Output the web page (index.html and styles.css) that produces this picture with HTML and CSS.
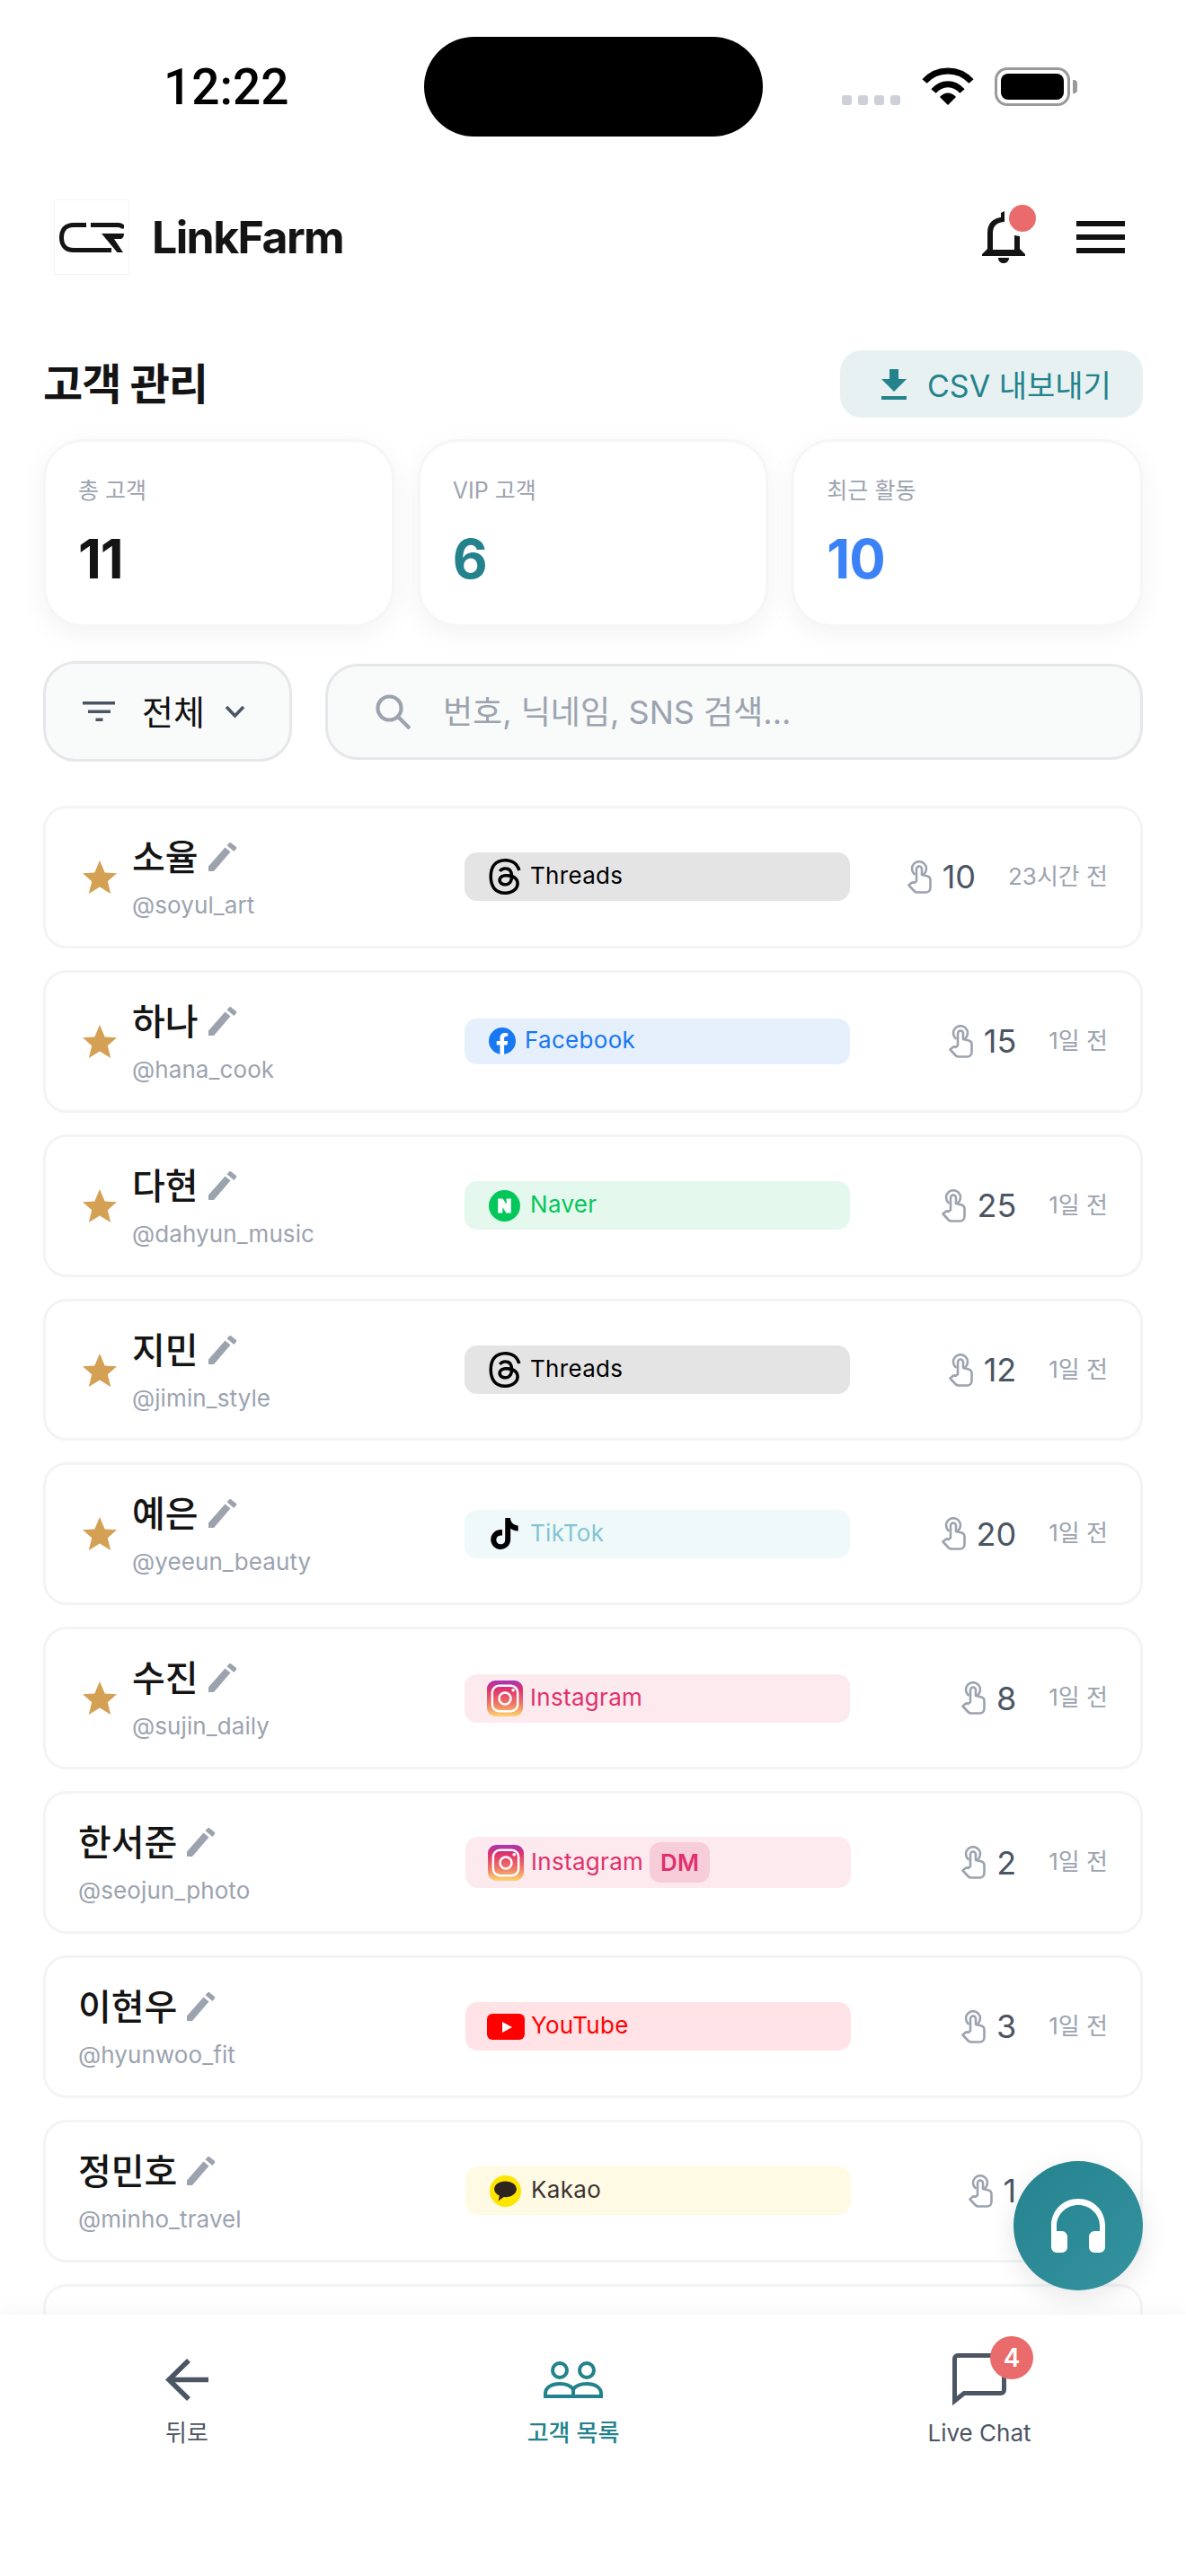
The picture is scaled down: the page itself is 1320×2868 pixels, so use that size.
FILE: index.html
```html
<!DOCTYPE html>
<html lang="ko">
<head>
  <meta charset="UTF-8">
  <title>LinkFarm</title>
  <link rel="stylesheet" href="styles.css">
</head>
<body>
  <svg class="defs" width="0" height="0">
    <defs>
      <linearGradient id="ig" x1="0" y1="0" x2="0" y2="1">
        <stop offset="0" stop-color="#a435b8"/>
        <stop offset=".25" stop-color="#e0326e"/>
        <stop offset=".65" stop-color="#ee7766"/>
        <stop offset="1" stop-color="#fdd56f"/>
      </linearGradient>
      <symbol id="i-star" viewBox="0 0 38 37"><path fill="#d4a053" d="M19 0l5.700 13.500L38 14.300 27.800 23.300 31.200 37 19 29.500 6.800 37l3.400-13.700L0 14.300l13.300-.8z"/></symbol>
      <symbol id="i-pen" viewBox="0 0 32 32"><path fill="#9ca3af" d="M0 32v-5.500L18.500 5.500l6 5L6 32zM20.500 3.300L23 .6c.6-.7 1.600-.8 2.300-.2l5.400 4.400c.7.6.8 1.600.2 2.300l-2.500 2.900z"/></symbol>
      <symbol id="i-tap" viewBox="0 0 27 37"><g fill="none" stroke="#9ca3af" stroke-width="2.600" stroke-linejoin="round" stroke-linecap="round"><path d="M7.500 15a8 8 0 1 1 11 0"/><path d="M10 23V9.500a3 3 0 0 1 6 0V16l5.500 1.200c2.500.6 4 2 4 4.500V30c0 3-2 5.500-5 5.500H11c-1.500 0-2.500-.5-3.500-1.500l-6-6.500 3-2.500c1-.8 2-.8 3 0z"/></g></symbol>
      <symbol id="i-threads" viewBox="0 0 24 24"><path fill="#000" d="M12.186 24h-.007c-3.581-.024-6.334-1.205-8.184-3.509C2.35 18.44 1.5 15.586 1.472 12.01v-.017c.03-3.579.879-6.43 2.525-8.482C5.845 1.205 8.6.024 12.18 0h.014c2.746.02 5.043.725 6.826 2.098 1.677 1.29 2.858 3.13 3.509 5.467l-2.04.569c-1.104-3.96-3.898-5.984-8.304-6.015-2.91.022-5.11.936-6.54 2.717C4.307 6.504 3.616 8.914 3.589 12c.027 3.086.718 5.496 2.057 7.164 1.43 1.783 3.631 2.698 6.54 2.717 2.623-.02 4.358-.631 5.8-2.045 1.647-1.613 1.618-3.593 1.09-4.798-.31-.71-.873-1.3-1.634-1.75-.192 1.352-.622 2.446-1.284 3.272-.886 1.102-2.14 1.704-3.73 1.79-1.202.065-2.361-.218-3.259-.801-1.063-.689-1.685-1.74-1.752-2.964-.065-1.19.408-2.285 1.33-3.082.88-.76 2.119-1.207 3.583-1.291a13.853 13.853 0 0 1 3.02.142c-.126-.742-.375-1.332-.75-1.757-.513-.586-1.308-.883-2.359-.89h-.029c-.844 0-1.992.232-2.721 1.32L7.734 7.847c.98-1.454 2.568-2.256 4.478-2.256h.044c3.194.02 5.097 1.975 5.287 5.388.108.046.216.094.321.142 1.49.7 2.58 1.761 3.154 3.07.797 1.82.871 4.79-1.548 7.158-1.85 1.81-4.094 2.628-7.277 2.65zm1.003-11.69c-.242 0-.487.007-.739.021-1.836.103-2.98.946-2.916 2.143.067 1.256 1.452 1.839 2.784 1.767 1.224-.065 2.818-.543 3.086-3.71a10.5 10.5 0 0 0-2.215-.221z"/></symbol>
      <symbol id="i-facebook" viewBox="0 0 24 24"><circle cx="12" cy="12" r="12" fill="#1877f2"/><path fill="#fff" d="M10 24v-8.500H7V12h3V9.300C10 6.300 11.800 4.700 14.500 4.700c1.300 0 2.500.2 2.500.2v2.900h-1.400c-1.400 0-1.900.9-1.900 1.800V12h3.200l-.5 3.500h-2.700V24z"/></symbol>
      <symbol id="i-naver" viewBox="0 0 24 24"><circle cx="12" cy="12" r="12" fill="#03c75a"/><path fill="#fff" d="M7 6.500h3.700l2.800 4.400V6.500H17v11h-3.700l-2.800-4.400v4.400H7z"/></symbol>
      <symbol id="i-tiktok" viewBox="0 0 24 24"><path fill="#000" d="M12.525.02c1.31-.02 2.61-.01 3.91-.02.08 1.53.63 3.09 1.75 4.17 1.12 1.11 2.7 1.62 4.24 1.79v4.03c-1.44-.05-2.89-.35-4.2-.97-.57-.26-1.1-.59-1.62-.93-.01 2.92.01 5.84-.02 8.75-.08 1.4-.54 2.79-1.35 3.94-1.31 1.92-3.58 3.17-5.91 3.21-1.43.08-2.86-.31-4.08-1.03-2.02-1.19-3.44-3.37-3.65-5.71-.02-.5-.03-1-.01-1.49.18-1.9 1.12-3.72 2.58-4.96 1.66-1.44 3.98-2.13 6.15-1.72.02 1.48-.04 2.96-.04 4.44-.99-.32-2.15-.23-3.02.37-.63.41-1.11 1.04-1.36 1.75-.21.51-.15 1.07-.14 1.61.24 1.64 1.82 3.02 3.5 2.87 1.12-.01 2.19-.66 2.77-1.61.19-.33.4-.67.41-1.06.1-1.79.06-3.57.07-5.36.01-4.03-.01-8.05.02-12.07z"/></symbol>
      <symbol id="i-instagram" viewBox="0 0 24 24"><rect width="24" height="24" rx="5.500" fill="url(#ig)"/><rect x="3.500" y="3.500" width="17" height="17" rx="4.500" fill="none" stroke="#fff" stroke-width="1.500"/><circle cx="12" cy="12" r="3.900" fill="none" stroke="#fff" stroke-width="1.500"/><circle cx="17.500" cy="6.500" r="1.100" fill="#fff"/></symbol>
      <symbol id="i-youtube" viewBox="0 0 42 29"><rect width="42" height="29" rx="6" fill="#f00"/><path fill="#fff" d="M17 9l11 6-11 6z"/></symbol>
      <symbol id="i-kakao" viewBox="0 0 24 24"><circle cx="12" cy="12" r="12" fill="#fee500"/><path fill="#2d2320" d="M12 4.500c-4.700 0-8.500 2.700-8.500 6 0 2.200 1.600 4 4 5.100l-1 3.900 4.300-3c.4 0 .8.100 1.200.100 4.700 0 8.500-2.700 8.500-6.100S16.700 4.500 12 4.500z"/></symbol>
    </defs>
  </svg>

  <div class="phone">
    <div class="status-bar">
      <span class="clock">12:22</span>
      <span class="island"></span>
      <div class="status-icons">
        <span class="signal"><i></i><i></i><i></i><i></i></span>
        <svg class="wifi" width="58" height="42" viewBox="0 0 58 42"><g fill="none" stroke="#000" stroke-width="7"><path d="M3 15.500C17 0 41 0 55 15.500"/><path d="M13 26.500C22 16 36 16 45 26.500"/></g><path fill="#000" d="M20 33C25 27 33 27 38 33L29 42z"/></svg>
        <span class="battery"><span class="battery-fill"></span></span>
        <span class="battery-cap"></span>
      </div>
    </div>

    <header class="app-header">
      <div class="brand">
        <span class="logo">
          <svg width="72" height="33" viewBox="0 0 72 33"><g fill="none" stroke="#141414" stroke-width="5"><path d="M30 2.500H16C7 2.500 2.500 8 2.500 16.500S7 30.500 16 30.500H58"/><path d="M35 2.500H65c3.500 0 6 1.500 6 4"/></g><path fill="#141414" d="M47 12H72c0 3-1 5-3 6h-8L71 33h-6.500z"/></svg>
        </span>
        <span class="brand-name">LinkFarm</span>
      </div>
      <div class="header-actions">
        <span class="bell">
          <svg width="48" height="58" viewBox="0 0 48 58"><path fill="#141414" d="M0 50v-2l6-6V24C6 14 12 8 21 7V2l4-2v12C17 12 12 17 12 24v19h24V27l6 1v14l6 6v2zM18 52h12c0 4-3 6-6 6s-6-2-6-6z"/></svg>
          <span class="bell-dot"></span>
        </span>
        <span class="menu"><i></i><i></i><i></i></span>
      </div>
    </header>

    <section class="title-row">
      <h1>고객 관리</h1>
      <button class="export-btn">
        <svg width="28" height="34" viewBox="0 0 28 34"><path fill="#23828c" d="M9 0h10v11h9L14 25 0 11h9zM0 30h28v4H0z"/></svg>
        <span>CSV 내보내기</span>
      </button>
    </section>

    <section class="stats">
      <div class="stat"><div class="stat-label">총 고객</div><div class="stat-value">11</div></div>
      <div class="stat"><div class="stat-label">VIP 고객</div><div class="stat-value teal">6</div></div>
      <div class="stat"><div class="stat-label">최근 활동</div><div class="stat-value blue">10</div></div>
    </section>

    <section class="filters">
      <div class="filter-select">
        <svg width="36" height="22" viewBox="0 0 36 22"><path fill="#4b5563" d="M0 0h36v3.500H0zM6 9.500h25v3.500H6zM14.500 18.500h8V22h-8z"/></svg>
        <span>전체</span>
        <svg width="23" height="15" viewBox="0 0 23 15"><path fill="none" stroke="#4b5563" stroke-width="3.600" d="M2 2l9.500 10L21 2"/></svg>
      </div>
      <div class="search">
        <svg width="39" height="39" viewBox="0 0 39 39"><g fill="none" stroke="#9ca3af" stroke-width="4.200"><circle cx="15.500" cy="15.500" r="13"/><path d="M25 25l13 13"/></g></svg>
        <span>번호, 닉네임, SNS 검색...</span>
      </div>
    </section>

    <section class="customers">
      <div class="customer">
        <svg class="star"><use href="#i-star"/></svg>
        <div class="who"><div class="name">소율 <svg class="pen"><use href="#i-pen"/></svg></div><div class="handle">@soyul_art</div></div>
        <div class="channel threads"><svg class="ch-icon tall"><use href="#i-threads"/></svg><span>Threads</span></div>
        <div class="count"><svg class="tap"><use href="#i-tap"/></svg><span>10</span></div>
        <div class="when">23시간 전</div>
      </div>
      <div class="customer">
        <svg class="star"><use href="#i-star"/></svg>
        <div class="who"><div class="name">하나 <svg class="pen"><use href="#i-pen"/></svg></div><div class="handle">@hana_cook</div></div>
        <div class="channel facebook"><svg class="ch-icon small"><use href="#i-facebook"/></svg><span>Facebook</span></div>
        <div class="count"><svg class="tap"><use href="#i-tap"/></svg><span>15</span></div>
        <div class="when">1일 전</div>
      </div>
      <div class="customer">
        <svg class="star"><use href="#i-star"/></svg>
        <div class="who"><div class="name">다현 <svg class="pen"><use href="#i-pen"/></svg></div><div class="handle">@dahyun_music</div></div>
        <div class="channel naver"><svg class="ch-icon mid"><use href="#i-naver"/></svg><span>Naver</span></div>
        <div class="count"><svg class="tap"><use href="#i-tap"/></svg><span>25</span></div>
        <div class="when">1일 전</div>
      </div>
      <div class="customer">
        <svg class="star"><use href="#i-star"/></svg>
        <div class="who"><div class="name">지민 <svg class="pen"><use href="#i-pen"/></svg></div><div class="handle">@jimin_style</div></div>
        <div class="channel threads"><svg class="ch-icon tall"><use href="#i-threads"/></svg><span>Threads</span></div>
        <div class="count"><svg class="tap"><use href="#i-tap"/></svg><span>12</span></div>
        <div class="when">1일 전</div>
      </div>
      <div class="customer">
        <svg class="star"><use href="#i-star"/></svg>
        <div class="who"><div class="name">예은 <svg class="pen"><use href="#i-pen"/></svg></div><div class="handle">@yeeun_beauty</div></div>
        <div class="channel tiktok"><svg class="ch-icon mid"><use href="#i-tiktok"/></svg><span>TikTok</span></div>
        <div class="count"><svg class="tap"><use href="#i-tap"/></svg><span>20</span></div>
        <div class="when">1일 전</div>
      </div>
      <div class="customer">
        <svg class="star"><use href="#i-star"/></svg>
        <div class="who"><div class="name">수진 <svg class="pen"><use href="#i-pen"/></svg></div><div class="handle">@sujin_daily</div></div>
        <div class="channel instagram"><svg class="ch-icon"><use href="#i-instagram"/></svg><span>Instagram</span></div>
        <div class="count"><svg class="tap"><use href="#i-tap"/></svg><span>8</span></div>
        <div class="when">1일 전</div>
      </div>
      <div class="customer">
        <div class="who"><div class="name">한서준 <svg class="pen"><use href="#i-pen"/></svg></div><div class="handle">@seojun_photo</div></div>
        <div class="channel instagram with-dm"><svg class="ch-icon"><use href="#i-instagram"/></svg><span>Instagram</span><b class="dm">DM</b></div>
        <div class="count"><svg class="tap"><use href="#i-tap"/></svg><span>2</span></div>
        <div class="when">1일 전</div>
      </div>
      <div class="customer">
        <div class="who"><div class="name">이현우 <svg class="pen"><use href="#i-pen"/></svg></div><div class="handle">@hyunwoo_fit</div></div>
        <div class="channel youtube"><svg class="ch-icon wide"><use href="#i-youtube"/></svg><span>YouTube</span></div>
        <div class="count"><svg class="tap"><use href="#i-tap"/></svg><span>3</span></div>
        <div class="when">1일 전</div>
      </div>
      <div class="customer">
        <div class="who"><div class="name">정민호 <svg class="pen"><use href="#i-pen"/></svg></div><div class="handle">@minho_travel</div></div>
        <div class="channel kakao"><svg class="ch-icon mid"><use href="#i-kakao"/></svg><span>Kakao</span></div>
        <div class="count"><svg class="tap"><use href="#i-tap"/></svg><span>1</span></div>
        <div class="when">1일 전</div>
      </div>
      <div class="customer"></div>
    </section>

    <button class="fab">
      <svg width="60" height="60" viewBox="0 0 60 60"><path fill="#fff" d="M0 54V30C0 13 13 0 30 0s30 13 30 30v24c0 3-3 6-6 6h-6c-3 0-6-3-6-6V42c0-3 3-6 6-6h6v-6C54 17 43 7 30 7S6 17 6 30v6h6c3 0 6 3 6 6v12c0 3-3 6-6 6H6c-3 0-6-3-6-6z"/></svg>
    </button>

    <nav class="tabbar">
      <div class="tab tab-back">
        <span class="tab-icon"><svg width="48" height="47" viewBox="0 0 48 47"><path fill="none" stroke="#4b5563" stroke-width="5.500" d="M26 2L4 23.500 26 45M4 23.500h44"/></svg></span>
        <span>뒤로</span>
      </div>
      <div class="tab tab-list active">
        <span class="tab-icon"><svg width="66" height="41" viewBox="0 0 66 41"><g fill="none" stroke="#23828c" stroke-width="4"><circle cx="18" cy="10" r="8"/><circle cx="48" cy="10" r="8"/><path d="M2 39v-3c0-7 7-11 16-11 7 0 12 2 15 6 3-4 8-6 15-6 9 0 16 4 16 11v3zM33 31v8"/></g></svg></span>
        <span>고객 목록</span>
      </div>
      <div class="tab tab-chat">
        <span class="tab-icon"><svg width="60" height="59" viewBox="0 0 60 59"><path fill="none" stroke="#4b5563" stroke-width="5" d="M2.500 53V6c0-2 1.500-3.500 3.500-3.500h48c2 0 3.500 1.500 3.500 3.500v35c0 2-1.500 3.500-3.500 3.500H13z"/></svg></span>
        <span>Live Chat</span>
        <b class="chat-badge">4</b>
      </div>
    </nav>
  </div>
</body>
</html>
```

FILE: styles.css
```css
* {
  box-sizing: border-box;
}

html, body {
  margin: 0;
  padding: 0;
  background: #fff;
}

body {
  font-family: Inter, "Noto Sans CJK KR", sans-serif;
  color: #111;
}

.defs {
  position: absolute;
}

.phone {
  position: relative;
  width: 1320px;
  height: 2868px;
  overflow: hidden;
  background: #fff;
}

/* status bar */
.status-bar {
  height: 196px;
  display: flex;
  align-items: flex-start;
}

.clock {
  width: 290px;
  margin: 70px 0 0 182px;
  font-family: Roboto, sans-serif;
  font-size: 55px;
  line-height: 54px;
  font-weight: 500;
  color: #000;
}

.island {
  width: 377px;
  height: 111px;
  margin-top: 41px;
  background: #000;
  border-radius: 56px;
}

.status-icons {
  display: flex;
  align-items: flex-start;
  margin: 75px 0 0 88px;
}

.signal {
  display: flex;
  gap: 7px;
  margin: 31px 24px 0 0;
}

.signal i {
  width: 11px;
  height: 11px;
  background: #cdd0d6;
  border-radius: 3px;
}

.wifi {
  margin-right: 23px;
}

.battery {
  width: 84px;
  height: 43px;
  border: 3px solid #9a9a9c;
  border-radius: 14px;
  padding: 4px;
}

.battery-fill {
  display: block;
  height: 100%;
  background: #000;
  border-radius: 8px;
}

.battery-cap {
  width: 5px;
  height: 15px;
  margin: 14px 0 0 3px;
  background: #9a9a9c;
  border-radius: 0 4px 4px 0;
}

/* app header */
.app-header {
  height: 194px;
  padding: 26px 68px 0 60px;
  display: flex;
  justify-content: space-between;
  align-items: flex-start;
}

.brand {
  display: flex;
  align-items: center;
  gap: 25px;
}

.logo {
  width: 84px;
  height: 84px;
  border: 1px solid #f3f3f3;
  display: flex;
  align-items: center;
  justify-content: center;
}

.brand-name {
  font-size: 50px;
  font-weight: 700;
  letter-spacing: -1.600px;
  color: #141414;
}

.header-actions {
  display: flex;
  align-items: center;
  height: 84px;
  gap: 57px;
}

.bell {
  position: relative;
  width: 48px;
  height: 58px;
}

.bell svg {
  display: block;
}

.bell-dot {
  position: absolute;
  left: 30px;
  top: -7px;
  width: 30px;
  height: 30px;
  background: #e96b6b;
  border-radius: 50%;
}

.menu {
  display: flex;
  flex-direction: column;
  gap: 9px;
  width: 54px;
}

.menu i {
  display: block;
  height: 6px;
  background: #111;
}

/* title */
.title-row {
  padding: 0 48px;
  height: 75px;
  margin-bottom: 24px;
  display: flex;
  justify-content: space-between;
  align-items: center;
}

h1 {
  margin: 0;
  font-size: 48px;
  line-height: 75px;
  font-weight: 700;
  letter-spacing: -1px;
  color: #141414;
}

.export-btn {
  width: 337px;
  height: 75px;
  border: 0;
  background: #e7f1f2;
  border-radius: 24px;
  display: flex;
  align-items: center;
  gap: 23px;
  font-family: inherit;
  font-size: 34px;
  color: #23828c;
  padding: 0 0 0 46px;
}

/* stat cards */
.stats {
  padding: 0 48px;
  display: flex;
  gap: 26px;
}

.stat {
  flex: 1;
  height: 209px;
  padding: 34px 36px 0;
  border: 3px solid #f6f6f7;
  border-radius: 44px;
  background: #fff;
  box-shadow: 0 8px 32px rgba(17, 24, 39, .05);
}

.stat-label {
  font-size: 25px;
  line-height: 40px;
  color: #9ca3af;
}

.stat-value {
  margin-top: 23px;
  font-size: 60px;
  line-height: 66px;
  font-weight: 700;
  letter-spacing: -1px;
  color: #141414;
}

.stat-value.teal {
  color: #23828c;
}

.stat-value.blue {
  color: #3b82f6;
}

/* filters */
.filters {
  padding: 0 48px;
  margin-top: 38px;
  display: flex;
  align-items: center;
  gap: 37px;
}

.filter-select {
  width: 277px;
  height: 112px;
  background: #f9fafa;
  border: 3px solid #e5e7eb;
  border-radius: 36px;
  padding-left: 41px;
  display: flex;
  align-items: center;
  font-size: 38px;
  color: #111;
}

.filter-select span {
  margin: -4px 22px 0 30px;
}

.search {
  flex: 1;
  height: 107px;
  background: #f9fafa;
  border: 3px solid #e5e7eb;
  border-radius: 36px;
  padding-left: 53px;
  display: flex;
  align-items: center;
  gap: 36px;
  font-size: 36px;
  color: #9ca3af;
}

.search span {
  margin-top: -4px;
}

/* customer list */
.customers {
  padding: 0 48px;
  margin-top: 49px;
  display: flex;
  flex-direction: column;
  gap: 24px;
}

.customer {
  height: 158.86px;
  flex: none;
  background: #fff;
  border: 3px solid #f3f4f6;
  border-radius: 26px;
  display: flex;
  align-items: center;
  padding: 0 36px;
}

.star {
  width: 38px;
  height: 37px;
  margin: 0 17px 0 5px;
  flex: none;
}

.who {
  width: 431px;
  flex: none;
  padding-top: 3px;
}

.star + .who {
  width: 370px;
}

.name {
  display: flex;
  align-items: center;
  gap: 11px;
  font-size: 40px;
  line-height: 50px;
  font-weight: 500;
  color: #141414;
}

.pen {
  width: 32px;
  height: 32px;
  margin-top: -2px;
}

.handle {
  font-size: 26px;
  line-height: 36px;
  letter-spacing: .1px;
  color: #9ca3af;
  margin-top: 10px;
}

.channel {
  width: 429px;
  height: 54px;
  flex: none;
  border-radius: 14px;
  display: flex;
  align-items: center;
  padding-left: 25px;
  gap: 8px;
  font-size: 26px;
  letter-spacing: .3px;
}

.channel span {
  margin-top: -3px;
}

.channel.facebook {
  height: 51px;
}

.channel.with-dm {
  height: 57px;
}

.ch-icon {
  width: 40px;
  height: 40px;
  flex: none;
}

.ch-icon.tall {
  height: 42px;
}

.ch-icon.mid {
  width: 35px;
  height: 35px;
  margin: 0 3px 0 2px;
}

.ch-icon.small {
  width: 30px;
  height: 30px;
  margin: 0 2px;
}

.ch-icon.wide {
  width: 42px;
  height: 29px;
  margin: 0 -1px;
}

.threads { background: #e4e4e4; color: #000; }
.facebook { background: #e6f0fc; color: #1877f2; }
.naver { background: #e5f8ee; color: #03c75a; }
.tiktok { background: #eff9fa; color: #84c4d4; }
.instagram { background: #fdeaef; color: #e1306c; }
.youtube { background: #ffe3e6; color: #f00; }
.kakao { background: #fefae4; color: #3c3432; }

.dm {
  margin-left: -1px;
  height: 45px;
  padding: 0 12px;
  display: flex;
  align-items: center;
  background: #f8cdda;
  border-radius: 12px;
  font-weight: 600;
  font-size: 26px;
  letter-spacing: 0;
}

.count {
  margin-left: auto;
  display: flex;
  align-items: center;
  gap: 12px;
  font-size: 36px;
  color: #4b5563;
}

.tap {
  width: 27px;
  height: 37px;
}

.when {
  margin: -6px 0 0 36px;
  text-align: right;
  font-size: 26px;
  color: #9ca3af;
  white-space: nowrap;
}

/* floating button */
.fab {
  position: absolute;
  left: 1128px;
  top: 2406px;
  width: 144px;
  height: 144px;
  border: 0;
  padding: 0;
  border-radius: 50%;
  background: linear-gradient(135deg, #26828f, #33939f);
  box-shadow: 0 8px 30px rgba(17, 24, 39, .10);
  display: flex;
  align-items: center;
  justify-content: center;
}

/* bottom tabs */
.tabbar {
  position: absolute;
  left: 0;
  bottom: 0;
  width: 1320px;
  height: 291px;
  background: #fff;
  box-shadow: 0 -4px 24px rgba(17, 24, 39, .04);
  display: flex;
}

.tab {
  position: relative;
  padding-top: 40px;
  display: flex;
  flex-direction: column;
  align-items: center;
  font-size: 26px;
  line-height: 36px;
  color: #4b5563;
}

.tab-icon {
  height: 64px;
  margin-bottom: 10px;
  display: flex;
  align-items: center;
}

.tab-back { width: 416px; }
.tab-list { width: 444px; }
.tab-chat { width: 460px; }

.tab.active {
  color: #23828c;
  font-weight: 500;
}

.chat-badge {
  position: absolute;
  left: calc(50% + 12px);
  top: 24px;
  width: 48px;
  height: 48px;
  border-radius: 50%;
  background: #e96b6b;
  color: #fff;
  font-size: 28px;
  line-height: 48px;
  font-weight: 600;
  text-align: center;
}
```
